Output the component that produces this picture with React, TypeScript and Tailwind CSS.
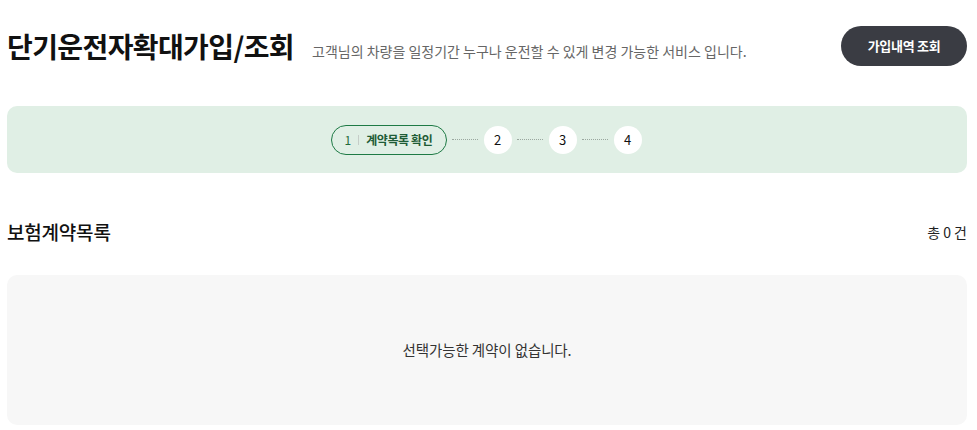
import React from 'react';

const font = { fontFamily: '"Noto Sans CJK KR", "Noto Sans", sans-serif' };

function Dots() {
  return <span className="w-[26px] mx-[5px] border-t border-dotted border-[#9aa79f]" />;
}

function StepCircle({ n }: { n: number }) {
  return (
    <span className="w-[28px] h-[28px] rounded-full bg-white flex items-center justify-center text-[13px] text-[#111]">
      {n}
    </span>
  );
}

export default function App() {
  return (
    <div className="w-[977px] h-[430px] bg-white overflow-hidden px-[7px] pr-[10px]" style={font}>
      {/* header */}
      <div className="flex items-center h-[92px]">
        <h1 className="text-[28px] font-bold text-[#111] tracking-[-0.6px] leading-none">단기운전자확대가입/조회</h1>
        <p className="ml-[18px] mt-[10px] text-[14px] text-[#666]">
          고객님의 차량을 일정기간 누구나 운전할 수 있게 변경 가능한 서비스 입니다.
        </p>
        <button className="ml-auto w-[126px] h-[40px] rounded-full bg-[#3a3c43] text-white text-[13px] font-bold tracking-[-0.3px]">
          가입내역 조회
        </button>
      </div>

      {/* steps */}
      <div className="mt-[14px] h-[67px] rounded-[10px] bg-[#e0efe5] flex items-center justify-center">
        <div className="flex items-center ml-[-2px]">
          <span className="h-[30px] w-[116px] rounded-full border border-[#1e7a45] flex items-center pl-[13px] text-[12px]">
            <span className="text-[#1e6b3c]">1</span>
            <span className="mx-[7px] h-[10px] border-l border-[#c5cdc8]" />
            <span className="font-bold text-[#1e5c36] tracking-[-0.4px]">계약목록 확인</span>
          </span>
          <span className="w-[37px] flex justify-center"><Dots /></span>
          <StepCircle n={2} />
          <span className="w-[37px] flex justify-center"><Dots /></span>
          <StepCircle n={3} />
          <span className="w-[37px] flex justify-center"><Dots /></span>
          <StepCircle n={4} />
        </div>
      </div>

      {/* list header */}
      <div className="mt-[44px] flex items-center justify-between h-[30px]">
        <h2 className="text-[19px] font-medium text-[#111] tracking-[-0.2px]">보험계약목록</h2>
        <span className="text-[14px] text-[#222]">총 0 건</span>
      </div>

      {/* empty */}
      <div className="mt-[28px] h-[150px] rounded-[10px] bg-[#f7f7f7] flex items-center justify-center">
        <p className="text-[14.5px] text-[#333] tracking-[-0.1px]">선택가능한 계약이 없습니다.</p>
      </div>
    </div>
  );
}
